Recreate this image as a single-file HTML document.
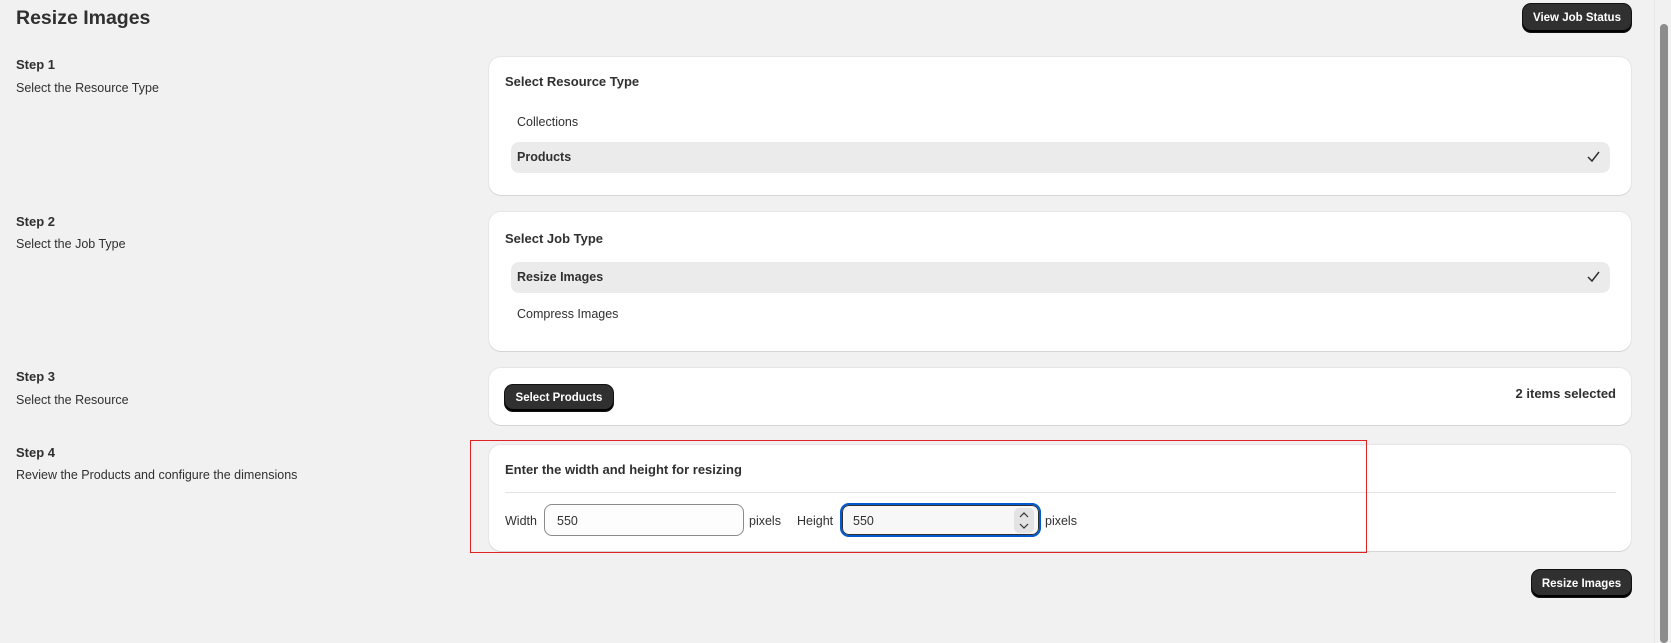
<!DOCTYPE html>
<html><head><meta charset="utf-8"><style>
*{box-sizing:border-box;margin:0;padding:0}
body{width:1671px;height:643px;background:#f1f1f1;font-family:"Liberation Sans",sans-serif;color:#303030;position:relative;overflow:hidden;font-size:12.5px}
.a{position:absolute;white-space:nowrap}
.b{font-weight:bold}
.card{position:absolute;left:489px;width:1142px;background:#fff;border-radius:12px;box-shadow:0 1px 0 #d4d4d4,0 0 0 1px #e6e6e6}
.row{position:absolute;left:22px;width:1099px;height:31px;background:#ebebeb;border-radius:8px}
.btn{position:absolute;background:#303030;color:#fff;font-weight:bold;font-size:11.5px;border-radius:8px;box-shadow:inset 0 -2px 0 #000,0 0 0 1px #111;display:flex;align-items:center;justify-content:center}
.chk{position:absolute;right:10px;top:9px}
</style></head><body>
<div class="a b" style="left:16px;top:7px;font-size:19.5px">Resize Images</div>
<div class="btn" style="left:1523px;top:4px;width:108px;height:28px">View Job Status</div>

<div class="a b" style="left:16px;top:57px;font-size:13px">Step 1</div>
<div class="a" style="left:16px;top:81px">Select the Resource Type</div>
<div class="a b" style="left:16px;top:214px;font-size:13px">Step 2</div>
<div class="a" style="left:16px;top:237px">Select the Job Type</div>
<div class="a b" style="left:16px;top:369px;font-size:13px">Step 3</div>
<div class="a" style="left:16px;top:393px">Select the Resource</div>
<div class="a b" style="left:16px;top:445px;font-size:13px">Step 4</div>
<div class="a" style="left:16px;top:468px">Review the Products and configure the dimensions</div>

<div class="card" style="top:57px;height:138px">
 <div class="a b" style="left:16px;top:17px;font-size:13px">Select Resource Type</div>
 <div class="a" style="left:28px;top:58px">Collections</div>
 <div class="row" style="top:85px"><div class="a b" style="left:6px;top:8px">Products</div>
 <svg class="chk" width="13" height="11" viewBox="0 0 13 11"><path d="M1 6l4 4 7-9" fill="none" stroke="#303030" stroke-width="1.5"/></svg></div>
</div>

<div class="card" style="top:212px;height:139px">
 <div class="a b" style="left:16px;top:19px;font-size:13px">Select Job Type</div>
 <div class="row" style="top:50px"><div class="a b" style="left:6px;top:8px">Resize Images</div>
 <svg class="chk" width="13" height="11" viewBox="0 0 13 11"><path d="M1 6l4 4 7-9" fill="none" stroke="#303030" stroke-width="1.5"/></svg></div>
 <div class="a" style="left:28px;top:95px">Compress Images</div>
</div>

<div class="card" style="top:368px;height:57px">
 <div class="btn" style="left:16px;top:17px;width:108px;height:26px">Select Products</div>
 <div class="a b" style="right:15px;top:18px;font-size:13px">2 items selected</div>
</div>

<div class="card" style="top:445px;height:106px">
 <div class="a b" style="left:16px;top:17px;font-size:13px">Enter the width and height for resizing</div>
 <div class="a" style="left:16px;top:47px;width:1111px;height:1px;background:#e3e3e3"></div>
 <div class="a" style="left:16px;top:69px">Width</div>
 <div class="a" style="left:55px;top:59px;width:200px;height:32px;border:1px solid #8a8a8a;border-radius:8px;background:#fdfdfd"><span class="a" style="left:12px;top:9px">550</span></div>
 <div class="a" style="left:260px;top:69px">pixels</div>
 <div class="a" style="left:308px;top:69px">Height</div>
 <div class="a" style="left:351px;top:58px;width:201px;height:34px;border:2px solid #005bd3;border-radius:9px;background:#f7f7f7;box-shadow:inset 0 0 0 1px #303030"><span class="a" style="left:11px;top:9px">550</span>
 <div class="a" style="right:5px;top:3px;width:20px;height:25px;background:#e3e3e3;border-radius:5px"><svg width="20" height="25" viewBox="0 0 20 25"><path d="M6 9l4-4 4 4M6 16l4 4 4-4" fill="none" stroke="#303030" stroke-width="1.2"/></svg></div></div>
 <div class="a" style="left:556px;top:69px">pixels</div>
</div>
<div class="a" style="left:470px;top:440px;width:897px;height:113px;border:1.5px solid #e02424"></div>

<div class="btn" style="left:1532px;top:570px;width:99px;height:27px">Resize Images</div>

<div class="a" style="left:1654px;top:0;width:17px;height:643px;background:#f1f1f1;border-left:1px solid #e6e6e6"></div>
<div class="a" style="left:1660px;top:24px;width:8px;height:619px;background:#8c8c8c;border-radius:4px"></div>
</body></html>
